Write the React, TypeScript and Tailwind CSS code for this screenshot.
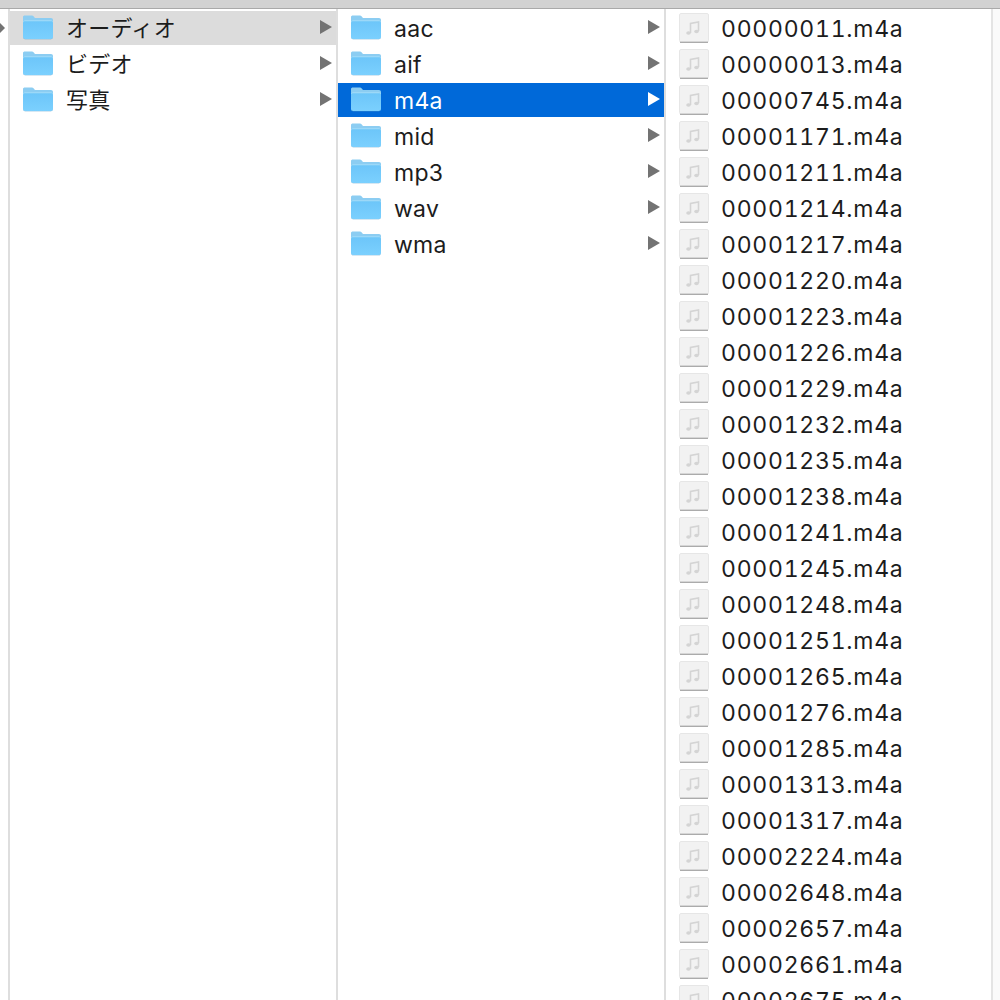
import React from "react";

const font = 'Inter, "Liberation Sans", "Noto Sans CJK JP", sans-serif';

function Folder() {
  return (
    <svg width="32" height="26" viewBox="0 0 32 26" className="shrink-0 mb-[2px]">
      <defs>
        <linearGradient id="fbody" x1="0" y1="0" x2="0" y2="1">
          <stop offset="0" stopColor="#6cc5f9" />
          <stop offset="1" stopColor="#7bd0fe" />
        </linearGradient>
      </defs>
      <path d="M1 3C1 2 1.800 1.500 3 1.500h6.500c1 0 1.600.3 2.200 1L13 4h16c1.200 0 2 .8 2 2v2H1Z" fill="#8ccdf2" />
      <path d="M1 8.500C1 7 1.800 6.300 3 6.300h26c1.200 0 2 .7 2 2.200V23c0 1.200-.8 2-2 2H3c-1.200 0-2-.8-2-2Z" fill="url(#fbody)" />
      <path d="M1 8.500C1 7 1.800 6.300 3 6.300h26c1.200 0 2 .7 2 2.200v.4c0-1-.8-1.600-2-1.600H3c-1.200 0-2 .6-2 1.600Z" fill="#a9def8" />
      <path d="M1 23c0 1.200.8 2 2 2h26c1.200 0 2-.8 2-2v.3c0 1.200-.8 2-2 2H3c-1.200 0-2-.8-2-2Z" fill="#5b9fc9" />
    </svg>
  );
}

function AudioFile() {
  return (
    <svg width="30" height="30" viewBox="0 0 30 30" className="shrink-0">
      <rect x="0.500" y="0.500" width="29" height="28.500" rx="1.500" fill="#f2f2f2" stroke="#e6e6e6" />
      <path d="M1 29.300h28" stroke="#a3a3a3" strokeWidth="1.200" />
      <path d="M11.500 20V10.500l8-1.500v9" fill="none" stroke="#d4d4d4" strokeWidth="1.600" />
      <ellipse cx="9.500" cy="20" rx="2.300" ry="1.800" fill="#d4d4d4" />
      <ellipse cx="17.500" cy="18.500" rx="2.300" ry="1.800" fill="#d4d4d4" />
    </svg>
  );
}

function Arrow({ color = "#737373" }: { color?: string }) {
  return (
    <svg width="12" height="14" viewBox="0 0 12 14" className="shrink-0 mb-[2px]">
      <path d="M0 0L12 7L0 14Z" fill={color} />
    </svg>
  );
}

function FolderRow({ name, cjk, state }: { name: string; cjk?: boolean; state?: "blue" | "gray" }) {
  const bg = state === "blue" ? "bg-[#0069d9] text-white" : state === "gray" ? "bg-[#dcdcdc] text-[#1c1c1c]" : "text-[#1c1c1c]";
  return (
    <div className={`h-[34px] mb-[2px] flex items-center pl-[12px] pr-[4px] ${bg}`}>
      <Folder />
      {cjk ? (
        <span className="ml-[12px] flex-1 text-[22px] tracking-[0.3px] leading-none">{name}</span>
      ) : (
        <span className="ml-[12px] flex-1 text-[23px] tracking-[0.3px] leading-none pt-[3px]">{name}</span>
      )}
      <Arrow color={state === "blue" ? "#ffffff" : "#737373"} />
    </div>
  );
}

const files = [
  "00000011", "00000013", "00000745", "00001171", "00001211", "00001214", "00001217",
  "00001220", "00001223", "00001226", "00001229", "00001232", "00001235", "00001238",
  "00001241", "00001245", "00001248", "00001251", "00001265", "00001276", "00001285",
  "00001313", "00001317", "00002224", "00002648", "00002657", "00002661", "00002675",
];

export default function App() {
  return (
    <div className="w-[1000px] h-[1000px] overflow-hidden bg-white flex flex-col" style={{ fontFamily: font }}>
      <div className="h-[9px] shrink-0 bg-[#d2d2d2] border-b border-[#a9a9a9]" />
      <div className="flex-1 flex min-h-0 pt-[2px]">
        <div className="w-[8px] shrink-0 relative">
          <svg width="5" height="10" viewBox="0 0 5 10" className="absolute top-[12px] left-0">
            <path d="M0 0L5 5L0 10Z" fill="#737373" />
          </svg>
        </div>
        <div className="w-[2px] shrink-0 -mt-[2px] bg-[#dedede]" />
        <div className="w-[326px] shrink-0">
          <FolderRow name="オーディオ" cjk state="gray" />
          <FolderRow name="ビデオ" cjk />
          <FolderRow name="写真" cjk />
        </div>
        <div className="w-[2px] shrink-0 -mt-[2px] bg-[#dedede]" />
        <div className="w-[326px] shrink-0">
          <FolderRow name="aac" />
          <FolderRow name="aif" />
          <FolderRow name="m4a" state="blue" />
          <FolderRow name="mid" />
          <FolderRow name="mp3" />
          <FolderRow name="wav" />
          <FolderRow name="wma" />
        </div>
        <div className="w-[2px] shrink-0 -mt-[2px] bg-[#dedede]" />
        <div className="w-[325px] shrink-0 overflow-hidden">
          {files.map((f) => (
            <div key={f} className="h-[34px] mb-[2px] flex items-center pl-[13px] text-[#1c1c1c]">
              <AudioFile />
              <span className="ml-[12px] text-[23px] tabular-nums tracking-[0.75px] leading-none pt-[3px] whitespace-nowrap">
                {f}.m4a
              </span>
            </div>
          ))}
        </div>
        <div className="flex-1 -mt-[2px] border-l-2 border-[#e4e4e4] bg-[#fafafa]" />
      </div>
    </div>
  );
}
